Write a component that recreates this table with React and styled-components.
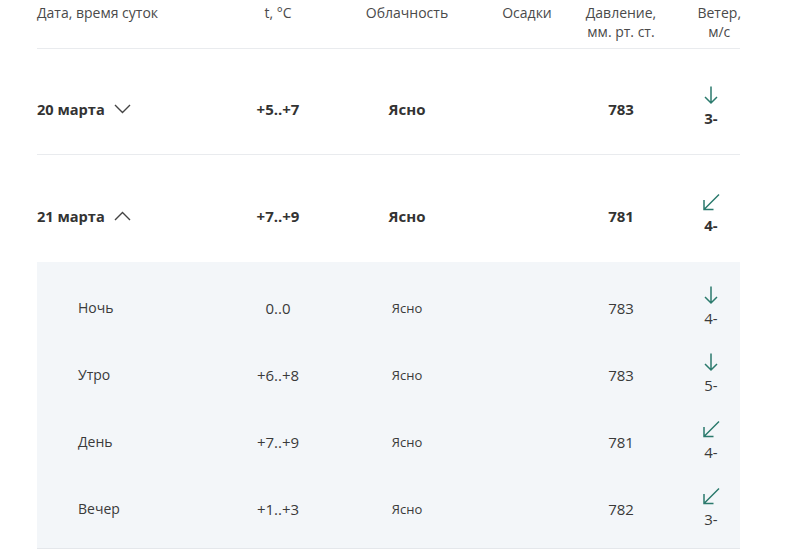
import React from 'react';
import styled, { createGlobalStyle } from 'styled-components';

const GlobalStyle = createGlobalStyle`
  body {
    margin: 0;
    background: #fff;
    font-family: "Open Sans", "Liberation Sans", sans-serif;
    color: #333;
  }
`;

const columns = '199px 84px 174px 66px 122px 58px';

const Table = styled.div`
  width: 703px;
  margin-left: 37px;
`;

const HeadRow = styled.div`
  display: grid;
  grid-template-columns: ${columns};
  align-items: start;
  height: 49px;
  border-bottom: 1px solid #e9ebee;
  box-sizing: border-box;
  font-size: 14px;
  line-height: 19px;
  color: #4a4a4a;
  padding-top: 3px;
`;

const HeadCell = styled.div`
  text-align: ${(p) => (p.$left ? 'left' : 'center')};
  ${(p) => p.$end && 'justify-self: end; margin-right: -1px;'}
`;

const DayRow = styled.div`
  display: grid;
  grid-template-columns: ${columns};
  align-items: center;
  height: ${(p) => p.$h}px;
  padding-top: 15px;
  border-bottom: ${(p) => (p.$open ? 'none' : '1px solid #e9ebee')};
  box-sizing: border-box;
  font-size: 15px;
  font-weight: 700;
  color: #333;
`;

const Cell = styled.div`
  text-align: center;
  font-size: ${(p) => p.$size || 15}px;
`;

const DateCell = styled.div`
  display: flex;
  align-items: center;
  gap: 9px;
  font-size: ${(p) => (p.$sub ? 14 : 14.6)}px;
  padding-left: ${(p) => (p.$sub ? 41 : 0)}px;
`;

const SubBlock = styled.div`
  background: #f3f6f9;
  padding: 12px 0 6px;
  border-bottom: 1px solid #e4e7eb;
`;

const SubRow = styled.div`
  display: grid;
  grid-template-columns: ${columns};
  align-items: center;
  height: 67px;
  font-size: 15px;
  font-weight: 400;
  color: #3a3a3a;
`;

const Wind = styled.div`
  display: flex;
  flex-direction: column;
  align-items: center;
  gap: 4px;
  line-height: 18px;
  font-size: 15px;
  margin-top: ${(p) => (p.$day ? -6 : -2)}px;
`;

const Chevron = ({ up }) => (
  <svg width="17" height="10" viewBox="0 0 17 10">
    <path
      d={up ? 'M1 9 L8.5 1.5 L16 9' : 'M1 1 L8.5 8.5 L16 1'}
      fill="none"
      stroke="#444"
      strokeWidth="1.4"
    />
  </svg>
);

const Arrow = ({ diag }) => (
  <svg width="20" height="19" viewBox="0 0 20 19">
    {diag ? (
      <path
        d="M18 1.5 L3 16.5 M3 7 L3 16.5 L12.5 16.5"
        fill="none"
        stroke="#2b7a6d"
        strokeWidth="1.5"
      />
    ) : (
      <path
        d="M10 0.5 L10 17 M4 11 L10 17 L16 11"
        fill="none"
        stroke="#2b7a6d"
        strokeWidth="1.5"
      />
    )}
  </svg>
);

const days = [
  { date: '20 марта', t: '+5..+7', cloud: 'Ясно', p: '783', diag: false, w: '3-', open: false, h: 106 },
  { date: '21 марта', t: '+7..+9', cloud: 'Ясно', p: '781', diag: true, w: '4-', open: true, h: 107 },
];

const parts = [
  { name: 'Ночь', t: '0..0', p: '783', diag: false, w: '4-' },
  { name: 'Утро', t: '+6..+8', p: '783', diag: false, w: '5-' },
  { name: 'День', t: '+7..+9', p: '781', diag: true, w: '4-' },
  { name: 'Вечер', t: '+1..+3', p: '782', diag: true, w: '3-' },
];

export default function App() {
  return (
    <>
      <GlobalStyle />
      <Table>
        <HeadRow>
          <HeadCell $left>Дата, время суток</HeadCell>
          <HeadCell>t, °C</HeadCell>
          <HeadCell>Облачность</HeadCell>
          <HeadCell>Осадки</HeadCell>
          <HeadCell>
            Давление,
            <br />
            мм. рт. ст.
          </HeadCell>
          <HeadCell $end>
            Ветер,
            <br />
            м/с
          </HeadCell>
        </HeadRow>
        {days.map((d) => (
          <React.Fragment key={d.date}>
            <DayRow $h={d.h} $open={d.open}>
              <DateCell>
                {d.date}
                <Chevron up={d.open} />
              </DateCell>
              <Cell>{d.t}</Cell>
              <Cell>{d.cloud}</Cell>
              <Cell />
              <Cell>{d.p}</Cell>
              <Wind $day>
                <Arrow diag={d.diag} />
                <span>{d.w}</span>
              </Wind>
            </DayRow>
            {d.open && (
              <SubBlock>
                {parts.map((s) => (
                  <SubRow key={s.name}>
                    <DateCell $sub>{s.name}</DateCell>
                    <Cell>{s.t}</Cell>
                    <Cell $size={13}>Ясно</Cell>
                    <Cell />
                    <Cell>{s.p}</Cell>
                    <Wind>
                      <Arrow diag={s.diag} />
                      <span>{s.w}</span>
                    </Wind>
                  </SubRow>
                ))}
              </SubBlock>
            )}
          </React.Fragment>
        ))}
      </Table>
    </>
  );
}
